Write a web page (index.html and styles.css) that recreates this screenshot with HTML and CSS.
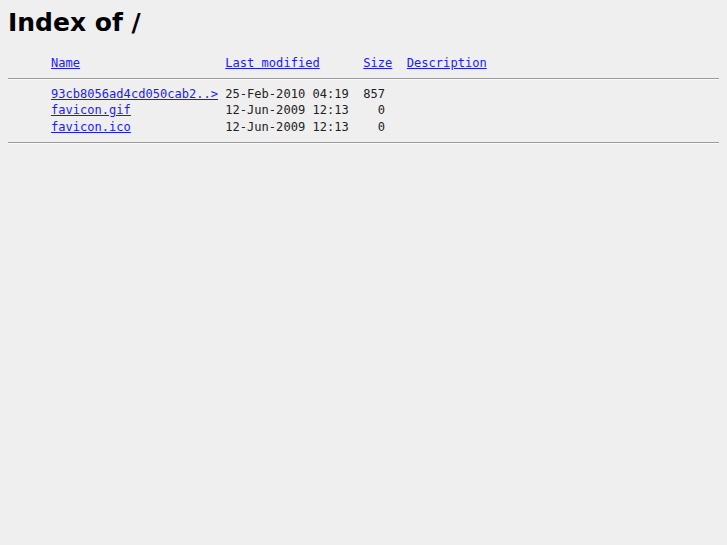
FILE: index.html
```html
<!DOCTYPE html>
<html lang="en">
<head>
  <meta charset="UTF-8">
  <title>Index of /</title>
  <link rel="stylesheet" href="styles.css">
</head>
<body>
  <h1 class="title">Index of /</h1>
  <div class="listing">
    <div class="row head">
      <span class="icon"></span>
      <span class="col-name"><a href="#">Name</a></span>
      <span class="col-date"><a href="#">Last modified</a></span>
      <span class="col-size"><a href="#">Size</a></span>
      <span class="col-desc"><a href="#">Description</a></span>
    </div>
    <hr class="rule">
    <div class="row">
      <span class="icon"></span>
      <span class="col-name"><a href="#">93cb8056ad4cd050cab2..&gt;</a></span>
      <span class="col-date">25-Feb-2010 04:19</span>
      <span class="col-size num">857</span>
    </div>
    <div class="row">
      <span class="icon"></span>
      <span class="col-name"><a href="#">favicon.gif</a></span>
      <span class="col-date">12-Jun-2009 12:13</span>
      <span class="col-size num">0</span>
    </div>
    <div class="row">
      <span class="icon"></span>
      <span class="col-name"><a href="#">favicon.ico</a></span>
      <span class="col-date">12-Jun-2009 12:13</span>
      <span class="col-size num">0</span>
    </div>
    <hr class="rule end">
  </div>
</body>
</html>
```
FILE: styles.css
```css
body {
  background: #efefef;
  color: #222;
  margin: 8px;
  font-family: "DejaVu Sans", sans-serif;
}

.title {
  font-size: 25px;
  font-weight: bold;
  margin: 0 0 18px;
  color: #000;
}

.listing {
  font-family: "DejaVu Sans Mono", monospace;
  font-size: 12.07px;
  line-height: 16.5px;
}

.row {
  display: flex;
  white-space: pre;
}

.icon {
  width: 43px;
  flex: none;
}

.col-name {
  width: 24ch;
  flex: none;
}

.col-date {
  width: 19ch;
  flex: none;
}

.col-size {
  width: 6ch;
  flex: none;
}

.num {
  width: 3ch;
  text-align: right;
}

a {
  color: #1a1aff;
}

.rule {
  margin: 6px 0;
  border: none;
  border-top: 1px solid #9a9a9a;
  border-bottom: 1px solid #fafafa;
}

.rule.end {
  margin-top: 7px;
}
```
